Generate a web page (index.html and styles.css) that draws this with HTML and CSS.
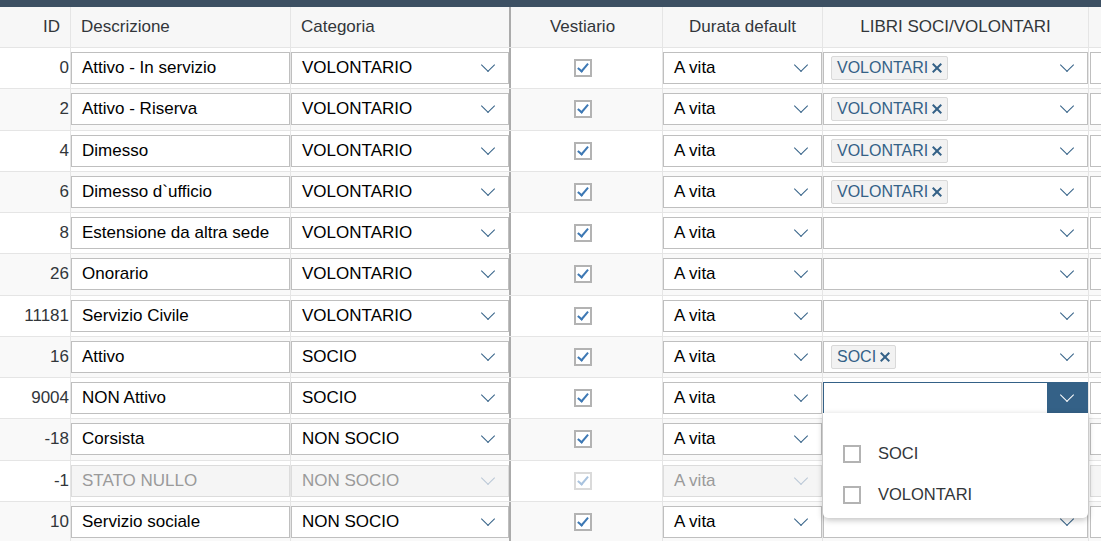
FILE: index.html
```html
<!DOCTYPE html>
<html lang="it">

<head>
    <meta charset="UTF-8">
    <meta name="viewport" content="width=device-width, initial-scale=1.0">
    <title>Stati socio</title>
    <link rel="stylesheet" href="styles.css">
</head>

<body>
    <div class="topbar"></div>
    <div class="table">
        <div class="row head">
            <div class="cell id">ID</div>
            <div class="cell">Descrizione</div>
            <div class="cell frozen">Categoria</div>
            <div class="cell center vest">Vestiario</div>
            <div class="cell center">Durata default</div>
            <div class="cell center">LIBRI SOCI/VOLONTARI</div>
            <div class="cell last"></div>
        </div>

        <div class="row">
            <div class="cell id">0</div>
            <div class="cell"><div class="input">Attivo - In servizio</div></div>
            <div class="cell frozen"><div class="input select">VOLONTARIO<span class="arrow"></span></div></div>
            <div class="cell center vest"><span class="check on"></span></div>
            <div class="cell"><div class="input select">A vita<span class="arrow"></span></div></div>
            <div class="cell"><div class="input select multi"><span class="token">VOLONTARI<span class="x"></span></span><span class="arrow"></span></div></div>
            <div class="cell last"><div class="input"></div></div>
        </div>

        <div class="row">
            <div class="cell id">2</div>
            <div class="cell"><div class="input">Attivo - Riserva</div></div>
            <div class="cell frozen"><div class="input select">VOLONTARIO<span class="arrow"></span></div></div>
            <div class="cell center vest"><span class="check on"></span></div>
            <div class="cell"><div class="input select">A vita<span class="arrow"></span></div></div>
            <div class="cell"><div class="input select multi"><span class="token">VOLONTARI<span class="x"></span></span><span class="arrow"></span></div></div>
            <div class="cell last"><div class="input"></div></div>
        </div>

        <div class="row">
            <div class="cell id">4</div>
            <div class="cell"><div class="input">Dimesso</div></div>
            <div class="cell frozen"><div class="input select">VOLONTARIO<span class="arrow"></span></div></div>
            <div class="cell center vest"><span class="check on"></span></div>
            <div class="cell"><div class="input select">A vita<span class="arrow"></span></div></div>
            <div class="cell"><div class="input select multi"><span class="token">VOLONTARI<span class="x"></span></span><span class="arrow"></span></div></div>
            <div class="cell last"><div class="input"></div></div>
        </div>

        <div class="row">
            <div class="cell id">6</div>
            <div class="cell"><div class="input">Dimesso d`ufficio</div></div>
            <div class="cell frozen"><div class="input select">VOLONTARIO<span class="arrow"></span></div></div>
            <div class="cell center vest"><span class="check on"></span></div>
            <div class="cell"><div class="input select">A vita<span class="arrow"></span></div></div>
            <div class="cell"><div class="input select multi"><span class="token">VOLONTARI<span class="x"></span></span><span class="arrow"></span></div></div>
            <div class="cell last"><div class="input"></div></div>
        </div>

        <div class="row">
            <div class="cell id">8</div>
            <div class="cell"><div class="input">Estensione da altra sede</div></div>
            <div class="cell frozen"><div class="input select">VOLONTARIO<span class="arrow"></span></div></div>
            <div class="cell center vest"><span class="check on"></span></div>
            <div class="cell"><div class="input select">A vita<span class="arrow"></span></div></div>
            <div class="cell"><div class="input select multi"><span class="arrow"></span></div></div>
            <div class="cell last"><div class="input"></div></div>
        </div>

        <div class="row">
            <div class="cell id">26</div>
            <div class="cell"><div class="input">Onorario</div></div>
            <div class="cell frozen"><div class="input select">VOLONTARIO<span class="arrow"></span></div></div>
            <div class="cell center vest"><span class="check on"></span></div>
            <div class="cell"><div class="input select">A vita<span class="arrow"></span></div></div>
            <div class="cell"><div class="input select multi"><span class="arrow"></span></div></div>
            <div class="cell last"><div class="input"></div></div>
        </div>

        <div class="row">
            <div class="cell id">11181</div>
            <div class="cell"><div class="input">Servizio Civile</div></div>
            <div class="cell frozen"><div class="input select">VOLONTARIO<span class="arrow"></span></div></div>
            <div class="cell center vest"><span class="check on"></span></div>
            <div class="cell"><div class="input select">A vita<span class="arrow"></span></div></div>
            <div class="cell"><div class="input select multi"><span class="arrow"></span></div></div>
            <div class="cell last"><div class="input"></div></div>
        </div>

        <div class="row">
            <div class="cell id">16</div>
            <div class="cell"><div class="input">Attivo</div></div>
            <div class="cell frozen"><div class="input select">SOCIO<span class="arrow"></span></div></div>
            <div class="cell center vest"><span class="check on"></span></div>
            <div class="cell"><div class="input select">A vita<span class="arrow"></span></div></div>
            <div class="cell"><div class="input select multi"><span class="token">SOCI<span class="x"></span></span><span class="arrow"></span></div></div>
            <div class="cell last"><div class="input"></div></div>
        </div>

        <div class="row">
            <div class="cell id">9004</div>
            <div class="cell"><div class="input">NON Attivo</div></div>
            <div class="cell frozen"><div class="input select">SOCIO<span class="arrow"></span></div></div>
            <div class="cell center vest"><span class="check on"></span></div>
            <div class="cell"><div class="input select">A vita<span class="arrow"></span></div></div>
            <div class="cell">
                <div class="input select multi open"><span class="arrow"></span>
                    <div class="popover">
                        <div class="option"><span class="check"></span>SOCI</div>
                        <div class="option"><span class="check"></span>VOLONTARI</div>
                    </div>
                </div>
            </div>
            <div class="cell last"><div class="input"></div></div>
        </div>

        <div class="row">
            <div class="cell id">-18</div>
            <div class="cell"><div class="input">Corsista</div></div>
            <div class="cell frozen"><div class="input select">NON SOCIO<span class="arrow"></span></div></div>
            <div class="cell center vest"><span class="check on"></span></div>
            <div class="cell"><div class="input select">A vita<span class="arrow"></span></div></div>
            <div class="cell"><div class="input select multi"><span class="arrow"></span></div></div>
            <div class="cell last"><div class="input"></div></div>
        </div>

        <div class="row disabled">
            <div class="cell id">-1</div>
            <div class="cell"><div class="input">STATO NULLO</div></div>
            <div class="cell frozen"><div class="input select">NON SOCIO<span class="arrow"></span></div></div>
            <div class="cell center vest"><span class="check on"></span></div>
            <div class="cell"><div class="input select">A vita<span class="arrow"></span></div></div>
            <div class="cell"><div class="input select multi"><span class="arrow"></span></div></div>
            <div class="cell last"><div class="input"></div></div>
        </div>

        <div class="row">
            <div class="cell id">10</div>
            <div class="cell"><div class="input">Servizio sociale</div></div>
            <div class="cell frozen"><div class="input select">NON SOCIO<span class="arrow"></span></div></div>
            <div class="cell center vest"><span class="check on"></span></div>
            <div class="cell"><div class="input select">A vita<span class="arrow"></span></div></div>
            <div class="cell"><div class="input select multi"><span class="arrow"></span></div></div>
            <div class="cell last"><div class="input"></div></div>
        </div>
    </div>
</body>

</html>
```

FILE: styles.css
```css
body {
    margin: 0;
    overflow: hidden;
    font-family: "Liberation Sans", Arial, sans-serif;
    font-size: 17px;
    color: #32363a;
    background: #ffffff;
}

.topbar {
    height: 7px;
    background: #3d5063;
}

.row {
    display: grid;
    grid-template-columns: 71px 220px 220px 152px 160px 266px 1fr;
    height: 41.25px;
    box-sizing: border-box;
    border-bottom: 1px solid #e5e5e5;
    background: #ffffff;
}

.row:nth-child(odd) {
    background: #f9f9f9;
}

.row.head {
    height: 41px;
    background: #f7f7f7;
}

.cell {
    display: flex;
    align-items: center;
    min-width: 0;
    border-right: 1px solid #e5e5e5;
}

.cell.frozen {
    border-right: 2px solid #ababab;
}

.cell.last {
    border-right: none;
    padding-left: 1px;
}

.head .cell {
    padding-left: 10px;
    white-space: nowrap;
}

.head .cell.id {
    justify-content: flex-end;
    padding: 0 10px 0 0;
}

.cell.center,
.head .cell.center {
    justify-content: center;
    padding-left: 0;
}

.cell.vest,
.head .cell.vest {
    padding-right: 8px;
}

.cell.id {
    justify-content: flex-end;
    padding-right: 1px;
}

.input {
    display: flex;
    align-items: center;
    width: 100%;
    height: 32px;
    box-sizing: border-box;
    border: 1px solid #bfbfbf;
    background: #ffffff;
    color: #000000;
    padding-left: 10px;
    white-space: nowrap;
}

.input.multi {
    padding-left: 7px;
    position: relative;
}

.arrow {
    margin-left: auto;
    width: 40px;
    height: 100%;
    flex: none;
    display: flex;
    align-items: center;
    justify-content: center;
}

.arrow::before {
    content: "";
    width: 9px;
    height: 9px;
    border-right: 1.3px solid #346187;
    border-bottom: 1.3px solid #346187;
    transform: translateY(-3px) rotate(45deg);
}

.token {
    display: inline-flex;
    align-items: center;
    height: 24px;
    box-sizing: border-box;
    padding: 0 5px 0 5px;
    border: 1px solid #d9d9d9;
    border-radius: 2px;
    background: #f2f2f2;
    color: #346187;
    font-size: 16px;
}

.x {
    position: relative;
    width: 10px;
    height: 10px;
    margin-left: 4px;
}

.x::before,
.x::after {
    content: "";
    position: absolute;
    left: 4px;
    top: -1px;
    width: 2px;
    height: 12px;
    background: #346187;
    transform: rotate(45deg);
}

.x::after {
    transform: rotate(-45deg);
}

.check {
    position: relative;
    width: 18px;
    height: 18px;
    box-sizing: border-box;
    border: 2px solid #b3b3b3;
    background: #ffffff;
    flex: none;
}

.check.on::after {
    content: "";
    position: absolute;
    left: 4px;
    top: 0px;
    width: 4px;
    height: 9px;
    border-right: 2px solid #3d78b4;
    border-bottom: 2px solid #3d78b4;
    transform: rotate(40deg);
}

/* open combo */
.input.open {
    border-color: #346187;
}

.open .arrow {
    background: #346187;
}

.open .arrow::before {
    border-color: #ffffff;
    border-width: 1.6px;
}

.popover {
    position: absolute;
    top: 100%;
    left: -1px;
    right: -1px;
    z-index: 10;
    padding: 20px 0 3px;
    background: #ffffff;
    border-radius: 0 0 5px 5px;
    box-shadow: 0 2px 6px rgba(0, 0, 0, 0.25);
}

.option {
    display: flex;
    align-items: center;
    height: 41px;
    padding-left: 20px;
    color: #32363a;
    font-size: 16.5px;
}

.option .check {
    margin-right: 17px;
}

/* disabled row */
.disabled .input {
    background: #f5f5f5;
    border-color: #dcdcdc;
    color: #9a9a9a;
}

.disabled .arrow::before {
    border-color: #b9c7d6;
}

.disabled .check {
    border-color: #dadada;
}

.disabled .check.on::after {
    border-color: #a9c3df;
}
```
